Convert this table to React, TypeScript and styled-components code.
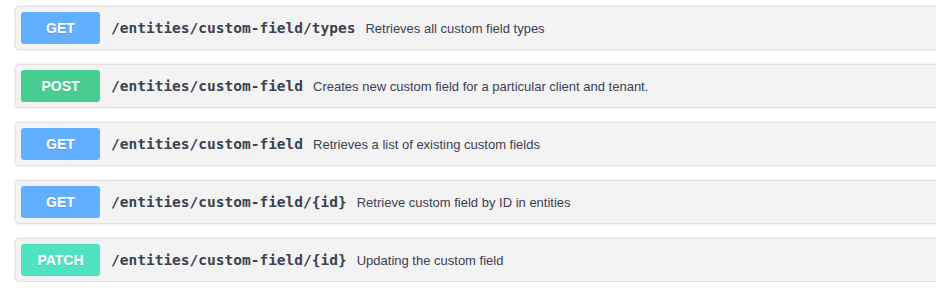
import React from 'react';
import styled, { createGlobalStyle } from 'styled-components';

const GlobalStyle = createGlobalStyle`
    html, body {
        margin: 0;
        padding: 0;
        background: #ffffff;
        overflow: hidden;
    }
`;

const Wrapper = styled.div`
    display: flex;
    flex-direction: column;
    gap: 14px;
    padding: 6px 0 0 15px;
    width: 940px;
`;

const Block = styled.div`
    display: flex;
    align-items: center;
    padding: 5px;
    background: #f3f3f3;
    border: 1px solid #e2e2e2;
    border-radius: 4px;
    box-shadow: 0 0 3px rgba(0, 0, 0, 0.12);
`;

const methodColors: Record<string, string> = {
    GET: '#61affe',
    POST: '#49cc90',
    PATCH: '#50e3c2',
};

const Method = styled.span<{ $method: string }>`
    display: flex;
    align-items: center;
    justify-content: center;
    width: 79px;
    height: 32px;
    border-radius: 3px;
    background: ${(p) => methodColors[p.$method]};
    color: #ffffff;
    font-family: 'Liberation Sans', Arial, sans-serif;
    font-size: 14px;
    font-weight: 700;
    text-shadow: 0 1px 0 rgba(0, 0, 0, 0.1);
`;

const Path = styled.span`
    margin-left: 11px;
    font-family: 'DejaVu Sans Mono', monospace;
    font-size: 14.5px;
    font-weight: 700;
    color: #3b4151;
`;

const Summary = styled.span`
    margin-left: 10px;
    font-family: 'Liberation Sans', Arial, sans-serif;
    font-size: 13px;
    color: #3b4151;
`;

const ops = [
    { method: 'GET', path: '/entities/custom-field/types', summary: 'Retrieves all custom field types' },
    { method: 'POST', path: '/entities/custom-field', summary: 'Creates new custom field for a particular client and tenant.' },
    { method: 'GET', path: '/entities/custom-field', summary: 'Retrieves a list of existing custom fields' },
    { method: 'GET', path: '/entities/custom-field/{id}', summary: 'Retrieve custom field by ID in entities' },
    { method: 'PATCH', path: '/entities/custom-field/{id}', summary: 'Updating the custom field' },
];

export default function App() {
    return (
        <>
            <GlobalStyle />
            <Wrapper>
                {ops.map((op, i) => (
                    <Block key={i}>
                        <Method $method={op.method}>{op.method}</Method>
                        <Path>{op.path}</Path>
                        <Summary>{op.summary}</Summary>
                    </Block>
                ))}
            </Wrapper>
        </>
    );
}
